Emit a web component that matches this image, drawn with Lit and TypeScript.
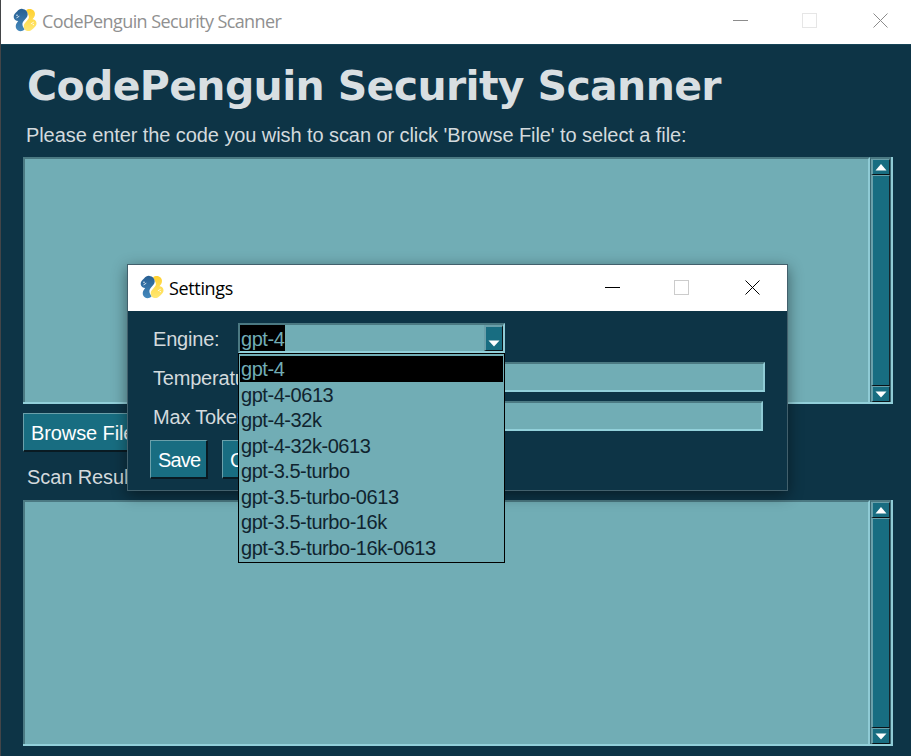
import { LitElement, html, css } from "lit";
import { customElement, property } from "lit/decorators.js";

@customElement("snake-logo")
class SnakeLogo extends LitElement {
  static styles = css`
    :host { display: block; width: 24px; height: 24px; }
    svg { display: block; }
  `;
  render() {
    return html`<svg width="24" height="24" viewBox="0 0 24 24">
      <defs>
        <linearGradient id="b" x1="0" y1="0" x2="0" y2="1"><stop offset="0" stop-color="#285f92" /><stop offset="1" stop-color="#4489bd" /></linearGradient>
        <linearGradient id="y" x1="0" y1="0" x2="0" y2="1"><stop offset="0" stop-color="#ffd030" /><stop offset="1" stop-color="#ffe873" /></linearGradient>
      </defs>
      <path fill="url(#y)" d="M13 2.500C14.500 .9 17 .7 19 1.500C21.500 2.600 22.500 5 21.800 7.500C21.400 9 20.500 10 19.500 11.300C21.500 11.400 23.300 12.700 23.500 14.900C23.700 17.300 22 18.800 20.300 20.500C18.500 22.400 16.500 23.300 14.500 23C12 22.600 10.500 20.700 10.700 18.300C10.900 16 12 14.800 13.500 13.200C15 11.700 16 10.700 15.900 8.800C15.700 6.800 14.300 4.500 13 2.500Z" />
      <path fill="url(#b)" d="M.7 9.200C.5 6.800 2.200 5.200 4 3.500C5.700 1.700 7.200 .6 9.500 .9C12.400 1.200 14.800 3.500 14.700 6.400C14.600 8.800 13 10.200 11.500 11.900C10 13.500 9 15 9.500 17.300C9.900 19 10.900 20.200 11.500 21.500C9.500 23.500 6.700 23.600 4.700 22.300C2.700 20.900 2.200 18.300 3.200 16C3.700 14.900 4.500 14 5.200 13.100C3 13 .9 11.500 .7 9.200Z" />
      <path d="M3.500 9.900L6.300 8.200" stroke="#fff" stroke-width=".8" />
      <circle cx="4" cy="7.300" r=".7" fill="#fff" />
      <path d="M17.900 15.800L20.700 14.200" stroke="#fff" stroke-width=".8" />
      <circle cx="20.300" cy="16.600" r=".7" fill="#fff" />
    </svg>`;
  }
}

@customElement("window-controls")
class WindowControls extends LitElement {
  static styles = css`
    :host { display: flex; align-items: center; }
    svg { display: block; width: 17px; height: 17px; shape-rendering: crispEdges; fill: none; stroke: var(--ink, #000); }
    .max { stroke: var(--faint, #ccc); margin-left: 52px; }
    .close { margin-left: 54px; shape-rendering: auto; }
  `;
  render() {
    return html`
      <svg class="min"><path d="M1 8.500H16" /></svg>
      <svg class="max"><path d="M1.500 1.500H15.500V15.500H1.500Z" /></svg>
      <svg class="close"><path d="M1.500 1.500L15.500 15.500M15.500 1.500L1.500 15.500" /></svg>
    `;
  }
}

@customElement("scroll-bar")
class ScrollBar extends LitElement {
  static styles = css`
    :host {
      display: flex; flex-direction: column; box-sizing: border-box; width: 21px;
      background: #186d81; border-left: 1px solid #3b6873; border-top: 2px solid #4b7982; border-right: 1px solid #3b6873;
    }
    .cell {
      box-sizing: border-box; border-left: 2px solid #6aa0aa; border-top: 1px solid #6aa0aa;
      border-right: 1px solid #15232a; border-bottom: 1px solid #0a1216;
      display: flex; justify-content: center; align-items: center; height: 16px;
    }
    .thumb { flex: 1; }
    .cell:last-child { padding-top: 1px; }
    svg { display: block; fill: #fff; }
  `;
  render() {
    return html`
      <div class="cell"><svg width="12" height="7"><path d="M6 0L11.500 6.500H.5Z" /></svg></div>
      <div class="cell thumb"></div>
      <div class="cell"><svg width="12" height="7"><path d="M6 6.500L11.500 .5H.5Z" /></svg></div>
    `;
  }
}

@customElement("text-area")
class TextArea extends LitElement {
  static styles = css`
    :host { display: flex; box-sizing: border-box; width: 870px; border-right: 2px solid #8fcbd5; border-bottom: 2px solid #92d0da; }
    .field { flex: 1; background: #71adb5; border-top: 2px solid #4b7982; border-left: 2px solid #4b7982; border-right: 2px solid #8fcbd5; }
  `;
  render() {
    return html`<div class="field"></div><scroll-bar></scroll-bar>`;
  }
}

@customElement("settings-dialog")
class SettingsDialog extends LitElement {
  @property({ attribute: false }) engines = [
    "gpt-4", "gpt-4-0613", "gpt-4-32k", "gpt-4-32k-0613", "gpt-3.5-turbo",
    "gpt-3.5-turbo-0613", "gpt-3.5-turbo-16k", "gpt-3.5-turbo-16k-0613",
  ];
  static styles = css`
    :host {
      display: block; box-sizing: border-box; width: 661px; height: 227px;
      background: #0d3446; border: 1px solid #42606c; box-shadow: 0 4px 14px rgba(0, 0, 0, .45);
      font: 20px/24px "Liberation Sans", Arial, sans-serif; color: #d3dadd; white-space: nowrap;
    }
    .bar { display: flex; align-items: center; height: 46px; background: #fff; color: #000; padding: 0 26px 2px 12px; box-sizing: border-box; }
    .title { flex: 1; margin-left: 5px; font: 18px/24px "Open Sans", "Noto Sans", sans-serif; letter-spacing: -.35px; padding-top: 2px; }
    .form { padding: 12px 0 0 22px; }
    .row { display: flex; height: 30px; margin-bottom: 9px; align-items: center; }
    .label { width: 88px; padding-left: 3px; box-sizing: border-box; letter-spacing: -.2px; padding-top: 1px; }
    .input { box-sizing: border-box; height: 30px; background: #71adb5; border: 2px solid #4b7982; border-right-color: #8fcbd5; border-bottom-color: #92d0da; position: relative; }
    .temp { width: 527px; }
    .max { width: 525px; }
    .combo { z-index: 1; width: 267px; display: flex; justify-content: space-between; color: #71adb5; letter-spacing: -.45px; }
    .picked { background: #000; padding: 0 1px; height: 26px; line-height: 28px; }
    .arrow { box-sizing: border-box; width: 19px; height: 26px; background: #186d81; border: 2px solid #6aa0aa; border-width: 2px 1px 1px 2px; border-right-color: #0a1216; border-bottom-color: #0a1216; display: flex; align-items: end; justify-content: center; padding-bottom: 3px; }
    .arrow svg { fill: #fff; }
    .list {
      position: absolute; left: -2px; top: 28px; width: 267px; height: 210px; box-sizing: border-box;
      background: #71adb5; border: 1px solid #000; padding: 2px 1px; color: #10242f;
    }
    .item { height: 25.5px; line-height: 26px; padding-left: 1px; }
    .item.on { background: #000; color: #71adb5; }
    .buttons { display: flex; gap: 14px; }
    .btn {
      box-sizing: border-box; height: 39px; line-height: 39px; color: #fff; background: #186d81; padding: 0 7px;
      border: 1px solid #6aa0aa; border-right: 2px solid #091a22; border-bottom: 2px solid #091a22; letter-spacing: -.8px;
    }
    .save { width: 58px; letter-spacing: -.8px; }
  `;
  render() {
    return html`
      <div class="bar"><snake-logo></snake-logo><div class="title">Settings</div><window-controls></window-controls></div>
      <div class="form">
        <div class="row">
          <div class="label">Engine:</div>
          <div class="input combo">
            <div class="picked">gpt-4</div>
            <div class="arrow"><svg width="12" height="7"><path d="M6 6.500L11.500 .5H.5Z" /></svg></div>
            <div class="list">
              ${this.engines.map((e, i) => html`<div class="item ${i === 0 ? "on" : ""}">${e}</div>`)}
            </div>
          </div>
        </div>
        <div class="row"><div class="label">Temperature:</div><div class="input temp"></div></div>
        <div class="row"><div class="label">Max Tokens:</div><div class="input max"></div></div>
        <div class="buttons"><div class="btn save">Save</div><div class="btn">Cancel</div></div>
      </div>
    `;
  }
}

@customElement("app-root")
class AppRoot extends LitElement {
  static styles = css`
    :host {
      display: block; position: relative; box-sizing: border-box; width: 911px; height: 756px; overflow: hidden;
      background: #0d3446; border-left: 1px solid #434548;
      font: 20px/24px "Liberation Sans", Arial, sans-serif; color: #d3dadd; white-space: nowrap;
    }
    .bar { display: flex; box-sizing: border-box; height: 45px; padding: 8px 22px 0 12px; background: #fff; color: #909090; border-bottom: 1px solid #164457; }
    .bar window-controls { --ink: #8c8c8c; --faint: #e6e6e6; height: 25px; }
    .caption { flex: 1; margin-left: 5px; font: 18px/26px "Open Sans", "Noto Sans", sans-serif; letter-spacing: -.6px; }
    .body { padding: 16px 0 0 22px; }
    .heading { font: bold 41px/50px "DejaVu Sans", Verdana, sans-serif; color: #d9dfe2; padding-left: 4px; height: 50px; letter-spacing: -.65px; }
    .prompt { height: 24px; padding-left: 3px; margin: 12px 0 10px; letter-spacing: -.08px; }
    .code { height: 247px; }
    .results { height: 246px; }
    .browse {
      box-sizing: border-box; height: 39px; width: 122px; margin-top: 9px; line-height: 38px; color: #fff; background: #186d81; padding: 0 7px;
      border: 1px solid #6aa0aa; border-right: 2px solid #091a22; border-bottom: 2px solid #091a22; letter-spacing: -.1px;
    }
    .scan { height: 24px; padding-left: 4px; margin: 13px 0 11px; letter-spacing: -.1px; }
    settings-dialog { position: absolute; left: 126px; top: 264px; }
  `;
  render() {
    return html`
      <div class="bar"><snake-logo></snake-logo><div class="caption">CodePenguin Security Scanner</div><window-controls></window-controls></div>
      <div class="body">
        <div class="heading">CodePenguin Security Scanner</div>
        <div class="prompt">Please enter the code you wish to scan or click 'Browse File' to select a file:</div>
        <text-area class="code"></text-area>
        <div class="browse">Browse File</div>
        <div class="scan">Scan Results:</div>
        <text-area class="results"></text-area>
      </div>
      <settings-dialog></settings-dialog>
    `;
  }
}
